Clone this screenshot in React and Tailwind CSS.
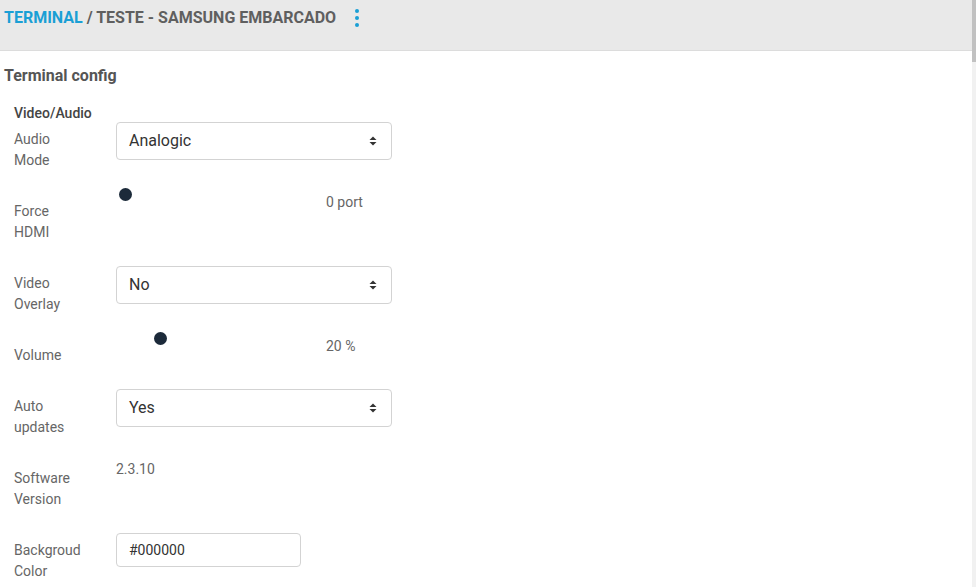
import React from "react";

const font = { fontFamily: "Roboto, 'Liberation Sans', sans-serif" };

function Arrows() {
  return (
    <svg width="8" height="10" viewBox="0 0 8 10" className="shrink-0">
      <path d="M4 0.5 L7.5 4 L0.5 4 Z" fill="#333" />
      <path d="M4 9.5 L7.5 6 L0.5 6 Z" fill="#333" />
    </svg>
  );
}

function Select({ value }) {
  return (
    <div className="w-[276px] h-[38px] border border-[#d3d3d3] rounded-[4px] bg-white flex items-center justify-between pl-[12px] pr-[14px]">
      <span className="text-[16px] text-[#333]">{value}</span>
      <Arrows />
    </div>
  );
}

function Slider({ value, label }) {
  return (
    <div className="flex items-start">
      <div className="relative w-[188px] ml-[3px] h-[10px]">
        <div
          className="absolute top-[-6px] w-[13px] h-[13px] rounded-full bg-[#1c2a3a]"
          style={{ left: `${value * 1.75}px` }}
        />
      </div>
      <span className="ml-[19px] mt-[1px] text-[14px] leading-[15px] text-[#666]">{label}</span>
    </div>
  );
}

function Row({ label, children }) {
  return (
    <div className="flex items-start mb-[23px]">
      <div className="w-[102px] pt-[7px] text-[14px] leading-[21px] text-[#666]">
        {label.map((l, i) => (
          <div key={i}>{l}</div>
        ))}
      </div>
      <div>{children}</div>
    </div>
  );
}

export default function App() {
  return (
    <div className="flex w-[976px] h-[587px] overflow-hidden bg-white" style={font}>
      <div className="flex-1 min-w-0">
        <div className="h-[51px] bg-[#e9e9e9] border-b border-[#dcdcdc] flex items-start pt-[8px] pl-[4px]">
          <div className="text-[16px] leading-[20px] font-bold uppercase text-[#5f5f5f]">
            <span className="text-[#1a9fd5]">Terminal</span> / Teste - Samsung Embarcado
          </div>
          <div className="ml-[19px] mt-[1px] flex flex-col gap-[3px] items-center">
            <span className="w-[4px] h-[4px] rounded-full bg-[#1a9fd5]" />
            <span className="w-[4px] h-[4px] rounded-full bg-[#1a9fd5]" />
            <span className="w-[4px] h-[4px] rounded-full bg-[#1a9fd5]" />
          </div>
        </div>
        <div className="pl-[4px] pt-[15px]">
          <div className="text-[16px] leading-[20px] font-bold text-[#555]">Terminal config</div>
        </div>
        <div className="pl-[14px] pt-[18px]">
          <div className="text-[14px] leading-[18px] font-medium text-[#444]">Video/Audio</div>
          <Row label={["Audio", "Mode"]}>
            <Select value="Analogic" />
          </Row>
          <Row label={["Force", "HDMI"]}>
            <Slider value={0} label="0 port" />
          </Row>
          <Row label={["Video", "Overlay"]}>
            <Select value="No" />
          </Row>
          <Row label={["Volume"]}>
            <Slider value={20} label="20 %" />
          </Row>
          <Row label={["Auto", "updates"]}>
            <Select value="Yes" />
          </Row>
          <Row label={["Software", "Version"]}>
            <div className="mt-[1px] text-[14px] leading-[15px] text-[#666]">2.3.10</div>
          </Row>
          <Row label={["Backgroud", "Color"]}>
            <div className="w-[185px] h-[34px] border border-[#d3d3d3] rounded-[4px] bg-white flex items-center pl-[12px] text-[14px] text-[#333]">
              #000000
            </div>
          </Row>
        </div>
      </div>
      <div className="w-[4px] h-full bg-[#f1f1f1] flex flex-col">
        <div className="h-[62px] bg-[#c1c1c1]" />
      </div>
    </div>
  );
}
